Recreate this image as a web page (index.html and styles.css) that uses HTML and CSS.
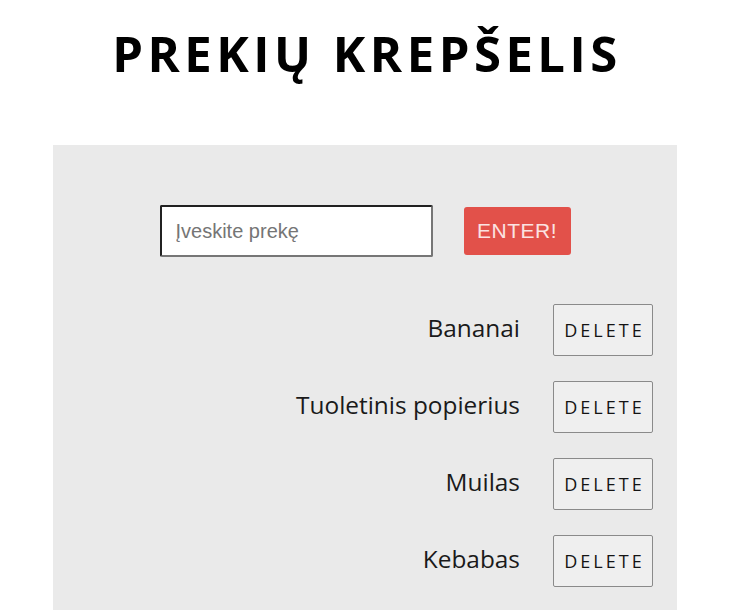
FILE: index.html
```html
<!DOCTYPE html>
<html lang="lt">
<head>
<meta charset="utf-8">
<link rel="stylesheet" href="styles.css">
</head>
<body>
<h1 class="title">PREKIŲ KREPŠELIS</h1>
<main class="box">
  <form class="add-form">
    <input class="add-input" type="text" placeholder="Įveskite prekę">
    <button class="add-btn" type="button">ENTER!</button>
  </form>
  <ul class="list">
    <li class="item"><span class="item-name">Bananai</span><button class="del-btn" type="button">DELETE</button></li>
    <li class="item"><span class="item-name">Tuoletinis popierius</span><button class="del-btn" type="button">DELETE</button></li>
    <li class="item"><span class="item-name">Muilas</span><button class="del-btn" type="button">DELETE</button></li>
    <li class="item"><span class="item-name">Kebabas</span><button class="del-btn" type="button">DELETE</button></li>
  </ul>
</main>
</body>
</html>
```
FILE: styles.css
```css
html, body {
  margin: 0;
  padding: 0;
  background: #ffffff;
  font-family: "Open Sans", "Liberation Sans", sans-serif;
  overflow: hidden;
}
.title {
  margin: 0;
  padding-top: 18px;
  height: 145px;
  box-sizing: border-box;
  text-align: center;
  font-size: 49px;
  font-weight: 700;
  letter-spacing: 4.5px;
  line-height: 70px;
  color: #000;
}
.box {
  margin-left: 53px;
  width: 624px;
  background: #eaeaea;
  padding-top: 60px;
  min-height: 470px;
  box-sizing: border-box;
}
.add-form {
  display: flex;
  justify-content: center;
  align-items: center;
  gap: 31px;
  margin: 0;
}
.add-input {
  width: 273px;
  height: 52px;
  box-sizing: border-box;
  font-family: "Liberation Sans", Arial, sans-serif;
  font-size: 20px;
  padding: 0 14px;
  border: 2px inset #767676;
  border-radius: 2px;
  background: #fff;
}
.add-input::placeholder {
  color: #757575;
}
.add-btn {
  width: 107px;
  height: 48px;
  border: none;
  border-radius: 3px;
  background: #e2514a;
  color: #fbe3e2;
  font-family: "Liberation Sans", Arial, sans-serif;
  font-size: 21px;
  letter-spacing: 0.5px;
  padding: 0;
}
.list {
  list-style: none;
  margin: 47px 0 0;
  padding: 0 24px 0 0;
  display: flex;
  flex-direction: column;
  gap: 25px;
}
.item {
  display: flex;
  justify-content: flex-end;
  align-items: center;
  gap: 33px;
}
.item-name {
  font-size: 24.4px;
  color: #1a1a1a;
  position: relative;
  top: -3px;
}
.del-btn {
  width: 100px;
  height: 52px;
  background: #efefef;
  border: 1px solid #8a8a8a;
  border-radius: 2px;
  font-family: "Open Sans", sans-serif;
  font-size: 18px;
  font-weight: 500;
  letter-spacing: 3px;
  color: #141414;
  padding: 0 0 0 3px;
}
```
